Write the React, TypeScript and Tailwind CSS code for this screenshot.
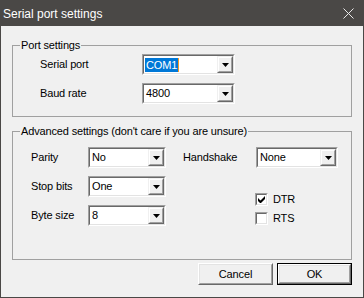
import React from "react";

function DropButton() {
  return (
    <div className="h-full w-[16px] border border-t-[#f0f0f0] border-l-[#f0f0f0] border-b-[#696969] border-r-[#696969]">
      <div className="h-full w-full border border-t-white border-l-white border-b-[#a0a0a0] border-r-[#a0a0a0] bg-[#f0f0f0] flex items-center justify-center">
        <svg width="7" height="4" viewBox="0 0 7 4">
          <path d="M0 0h7L3.5 4z" fill="#000" />
        </svg>
      </div>
    </div>
  );
}

function Combo({ width, value, selected = false }: { width: string; value: string; selected?: boolean }) {
  return (
    <div className={`${width} h-[21px] border border-t-[#a0a0a0] border-l-[#a0a0a0] border-b-white border-r-white`}>
      <div className="h-full flex items-stretch border border-t-[#696969] border-l-[#696969] border-b-[#e3e3e3] border-r-[#e3e3e3] bg-white">
        <div className="flex-1 flex items-center pl-[1px]">
          {selected ? (
            <>
              <span className="bg-[#0078d7] text-white px-[1px] leading-[14px]">{value}</span>
              <span className="w-[1px] h-[14px] bg-[#f59a23]" />
            </>
          ) : (
            <span className="pl-[1px]">{value}</span>
          )}
        </div>
        <DropButton />
      </div>
    </div>
  );
}

function Checkbox({ label, checked }: { label: string; checked: boolean }) {
  return (
    <div className="flex items-center gap-[5px] h-[13px]">
      <div className="w-[13px] h-[13px] border border-t-[#a0a0a0] border-l-[#a0a0a0] border-b-white border-r-white">
        <div className="w-full h-full border border-t-[#696969] border-l-[#696969] border-b-[#e3e3e3] border-r-[#e3e3e3] bg-white flex items-center justify-center">
          {checked && (
            <svg width="7" height="7" viewBox="0 0 7 7">
              <path d="M0 2v3l2 2h1l4-4V0L2.5 4.5z" fill="#000" />
            </svg>
          )}
        </div>
      </div>
      <span>{label}</span>
    </div>
  );
}

function Button({ label, isDefault = false }: { label: string; isDefault?: boolean }) {
  return (
    <div className={`w-[75px] h-[22px] ${isDefault ? "border border-black" : ""}`}>
      <div className="w-full h-full border border-t-white border-l-white border-b-[#696969] border-r-[#696969]">
        <div className="w-full h-full border border-t-[#e3e3e3] border-l-[#e3e3e3] border-b-[#a0a0a0] border-r-[#a0a0a0] bg-[#f0f0f0] flex items-center justify-center">
          {label}
        </div>
      </div>
    </div>
  );
}

export default function App() {
  return (
    <div className="w-[364px] h-[298px] bg-[#4a4846] flex flex-col font-['Liberation_Sans',Arial,sans-serif]">
      <div className="h-[26px] shrink-0 flex items-center justify-between pl-[3px] pr-[10px] pt-[2px] text-white text-[12px]">
        <span>Serial port settings</span>
        <svg width="11" height="11" viewBox="0 0 11 11" className="mb-[2px]">
          <path d="M0.5 0.5l10 10M10.5 0.5l-10 10" stroke="#e8e8e8" strokeWidth="1" />
        </svg>
      </div>
      <div className="flex-1 mx-[1px] mb-[1px] bg-[#f0f0f0] pt-[13px] pl-[11px] text-black text-[11px] tracking-[-0.15px]">
        <fieldset className="w-[340px] border border-[#a0a0a0]">
          <legend className="ml-[7px] px-[1px] leading-[13px]">Port settings</legend>
          <div className="grid grid-cols-[102px_93px] gap-y-[8px] items-center pl-[27px] pt-[2px] pb-[12px]">
            <span>Serial port</span>
            <Combo width="w-[93px]" value="COM1" selected />
            <span>Baud rate</span>
            <Combo width="w-[93px]" value="4800" />
          </div>
        </fieldset>
        <fieldset className="mt-[8px] w-[340px] border border-[#a0a0a0]">
          <legend className="ml-[7px] px-[1px] leading-[13px]">Advanced settings (don't care if you are unsure)</legend>
          <div className="flex items-start pl-[18px] pt-[9px] pb-[33px]">
            <div className="grid grid-cols-[57px_78px] gap-y-[8px] items-center">
              <span>Parity</span>
              <Combo width="w-[78px]" value="No" />
              <span>Stop bits</span>
              <Combo width="w-[78px]" value="One" />
              <span>Byte size</span>
              <Combo width="w-[78px]" value="8" />
            </div>
            <div className="ml-[17px] flex flex-col">
              <div className="grid grid-cols-[73px_82px] items-center">
                <span>Handshake</span>
                <Combo width="w-[82px]" value="None" />
              </div>
              <div className="pl-[72px] mt-[25px] flex flex-col gap-[6px]">
                <Checkbox label="DTR" checked />
                <Checkbox label="RTS" checked={false} />
              </div>
            </div>
          </div>
        </fieldset>
        <div className="mt-[3px] flex justify-end gap-[4px] pr-[11px]">
          <Button label="Cancel" />
          <Button label="OK" isDefault />
        </div>
      </div>
    </div>
  );
}
